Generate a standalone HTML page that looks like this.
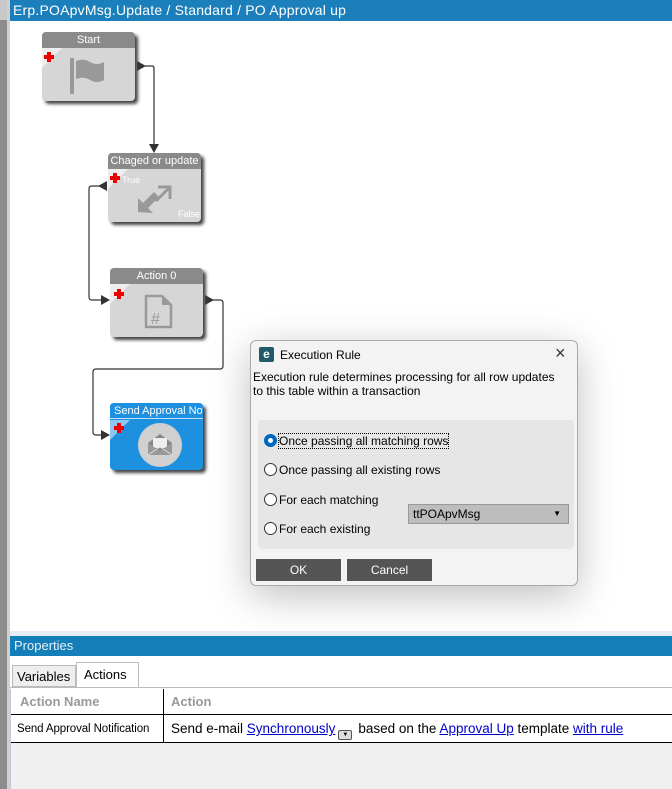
<!DOCTYPE html>
<html><head><style>
*{margin:0;padding:0;box-sizing:border-box}
body{width:672px;height:789px;overflow:hidden;background:#fff;font-family:"Liberation Sans",sans-serif;position:relative}
.a{position:absolute}
.node{position:absolute;width:93px;height:69px;background:#d6d6d6;border-radius:4px;box-shadow:3px 3px 3px #444}
.node .h{height:16px;background:#8a8a8a;color:#fff;font-size:11px;text-align:center;line-height:16px;border-radius:4px 4px 0 0;white-space:nowrap;overflow:hidden}
.tri{position:absolute;width:0;height:0;}
.plus{position:absolute;width:10px;height:10px}
.plus:before{content:"";position:absolute;left:3px;top:0;width:4px;height:10px;background:#e00}
.plus:after{content:"";position:absolute;left:0;top:3px;width:10px;height:4px;background:#e00}
.radio{position:absolute;width:13px;height:13px;border:1px solid #333;border-radius:50%;background:#fff}
.rl{position:absolute;font-size:12px;color:#000}
.btn{position:absolute;height:22px;background:#555;color:#fff;font-size:12px;text-align:center;line-height:22px}
a{color:#00c;text-decoration:underline}
</style></head><body>
<div class="a" style="left:0;top:0;width:7px;height:789px;background:#8c8c8c"></div>
<div class="a" style="left:7px;top:0;width:3px;height:789px;background:#d0d0d0"></div>
<div class="a" style="left:0;top:0;width:7px;height:20px;background:#c8c8c8"></div>
<div class="a" style="left:10px;top:0;width:662px;height:21px;background:#1a7fba;color:#fff;font-size:14px;line-height:21px;padding-left:3px;letter-spacing:0.2px">Erp.POApvMsg.Update / Standard / PO Approval up</div>

<svg class="a" style="left:0;top:0" width="672" height="632">
<g fill="none" stroke="#333" stroke-width="1.2">
<path d="M145 66 H152 Q154 66 154 68 V145"/>
<path d="M103 186 H92 Q89 186 89 189 V297 Q89 300 92 300 H103"/>
<path d="M212 300 H220 Q223 300 223 303 V366 Q223 369 220 369 H96 Q93 369 93 372 V432 Q93 435 96 435 H103"/>
</g>
<g fill="#333">
<polygon points="137,61 146,66 137,71"/>
<polygon points="149,144 159,144 154,153"/>
<polygon points="107,181 98,186 107,191"/>
<polygon points="101,295 110,300 101,305"/>
<polygon points="205,295 214,300 205,305"/>
<polygon points="101,430 110,435 101,440"/>
</g>
</svg>

<div class="node" style="left:42px;top:32px"><div class="h">Start</div>
<div class="tri" style="left:0;top:16px;border-right:20px solid transparent;border-top:20px solid #eee"></div>
<div class="plus" style="left:2px;top:20px"></div>
<svg class="a" style="left:28px;top:26px" width="40" height="36"><rect x="0" y="0" width="4" height="36" fill="#999"/><path d="M6 3 Q14 0 20 4 Q27 8 34 4 V22 Q27 26 20 22 Q14 18 6 21Z" fill="#999"/></svg>
</div>

<div class="node" style="left:108px;top:153px"><div class="h">Chaged or update</div>
<div class="tri" style="left:0;top:16px;border-right:20px solid transparent;border-top:20px solid #eee"></div>
<div class="plus" style="left:2px;top:20px"></div>
<div class="a" style="left:14px;top:22px;font-size:9px;color:#fff">True</div>
<div class="a" style="left:70px;top:56px;font-size:9px;color:#fff">False</div>
<svg class="a" style="left:28px;top:29px" width="38" height="32"><path d="M2 30 L2 16 L7 21 L18 10 L23 15 L12 26 L17 31Z" fill="#999"/><path d="M22 5 H34 V17 M34 5 L20 19" stroke="#999" stroke-width="3" fill="none"/></svg>
</div>

<div class="node" style="left:110px;top:268px"><div class="h">Action 0</div>
<div class="tri" style="left:0;top:16px;border-right:20px solid transparent;border-top:20px solid #eee"></div>
<div class="plus" style="left:4px;top:21px"></div>
<svg class="a" style="left:33px;top:26px" width="30" height="36"><path d="M3 2 H19 L28 11 V33 H3Z" fill="none" stroke="#999" stroke-width="2.5" stroke-linejoin="round"/><path d="M19 2 V11 H28" fill="#999"/><text x="8" y="30" font-size="16" fill="#999" font-family="Liberation Sans">#</text></svg>
</div>

<div class="node" style="left:110px;top:403px;background:#1e90e0;height:67px"><div class="h" style="background:#1e90e0;border-bottom:1px solid #bfe0f8;text-align:left;padding-left:4px">Send Approval Not</div>
<div class="tri" style="left:0;top:17px;border-right:20px solid transparent;border-top:20px solid #8cc8f0"></div>
<div class="plus" style="left:4px;top:20px"></div>
<svg class="a" style="left:28px;top:20px" width="44" height="44"><circle cx="22" cy="22" r="22" fill="#d0d0d0"/><path d="M10 20 L22 11 L34 20 V32 H10Z" fill="#888"/><rect x="15" y="15" width="14" height="10" fill="#eee"/><path d="M10 20 L22 28 L34 20 V32 H10Z" fill="#999"/><path d="M10 32 L22 24 L34 32" stroke="#ddd" fill="none"/></svg>
</div>

<div class="a" style="left:250px;top:340px;width:328px;height:246px;background:#f3f3f3;border:1px solid #aaa;border-radius:6px;box-shadow:0 10px 40px rgba(0,0,0,0.25)">
 <div class="a" style="left:8px;top:6px;width:15px;height:15px;background:#215a6a;border-radius:2px;color:#fff;font-size:12px;font-weight:bold;line-height:14px;text-align:center">e</div>
 <div class="a" style="left:29px;top:7px;font-size:12px">Execution Rule</div>
 <div class="a" style="left:304px;top:2px;font-size:18px;color:#333">×</div>
 <div class="a" style="left:2px;top:29px;width:312px;font-size:12px;line-height:14px;color:#000">Execution rule determines processing for all row updates to this table within a transaction</div>
 <div class="a" style="left:7px;top:79px;width:316px;height:129px;background:#e6e6e6;border-radius:4px"></div>
 <div class="radio" style="left:13px;top:93px;border:4px solid #0067c0"></div>
 <div class="rl" style="left:28px;top:93px;outline:1px dotted #000">Once passing all matching rows</div>
 <div class="radio" style="left:13px;top:122px"></div>
 <div class="rl" style="left:28px;top:122px">Once passing all existing rows</div>
 <div class="radio" style="left:13px;top:152px"></div>
 <div class="rl" style="left:28px;top:152px">For each matching</div>
 <div class="radio" style="left:13px;top:181px"></div>
 <div class="rl" style="left:28px;top:181px">For each existing</div>
 <div class="a" style="left:157px;top:163px;width:161px;height:20px;background:#bdbdbd;border:1px solid #999;font-size:12px;line-height:18px;padding-left:4px">ttPOApvMsg<span style="position:absolute;right:7px;top:0;font-size:8px">▼</span></div>
 <div class="btn" style="left:5px;top:218px;width:85px">OK</div>
 <div class="btn" style="left:96px;top:218px;width:85px">Cancel</div>
</div>

<div class="a" style="left:10px;top:631px;width:662px;height:5px;background:#e6ecf7"></div>
<div class="a" style="left:10px;top:636px;width:662px;height:20px;background:#137eb8;color:#e8f0f8;font-size:13px;line-height:20px;padding-left:4px">Properties</div>
<div class="a" style="left:10px;top:656px;width:662px;height:133px;background:#fff"></div>
<div class="a" style="left:12px;top:665px;width:64px;height:22px;background:#eee;border:1px solid #bbb;font-size:13px;line-height:21px;padding-left:4px">Variables</div>
<div class="a" style="left:76px;top:662px;width:63px;height:26px;background:#fff;border:1px solid #bbb;border-bottom:none;font-size:13px;line-height:24px;padding-left:7px">Actions</div>
<div class="a" style="left:10px;top:687px;width:662px;height:1px;background:#bbb"></div>
<div class="a" style="left:10px;top:689px;width:662px;height:100px;background:#f0f0f0;border-left:1px solid #c0c8e0"></div>
<div class="a" style="left:11px;top:689px;width:661px;height:26px;background:#fff;border-bottom:1px solid #000;font-size:13px;font-weight:bold;color:#999;line-height:26px"><span style="position:absolute;left:9px">Action Name</span><span style="position:absolute;left:160px">Action</span></div>
<div class="a" style="left:11px;top:715px;width:661px;height:28px;background:#fff;border-bottom:1px solid #000;line-height:28px"><span style="position:absolute;left:6px;font-size:11.5px;letter-spacing:-0.1px">Send Approval Notification</span><span style="position:absolute;left:160px;font-size:13.5px;white-space:nowrap">Send e-mail <a>Synchronously</a><span style="display:inline-block;width:14px;height:10px;border:1px solid #555;border-radius:2px;background:#ddd;font-size:6px;line-height:9px;text-align:center;vertical-align:-3px;margin:0 6px 0 3px">▼</span>based on the <a>Approval Up</a> template <a>with rule</a></span></div>
<div class="a" style="left:163px;top:689px;width:1px;height:54px;background:#000"></div>
</body></html>
